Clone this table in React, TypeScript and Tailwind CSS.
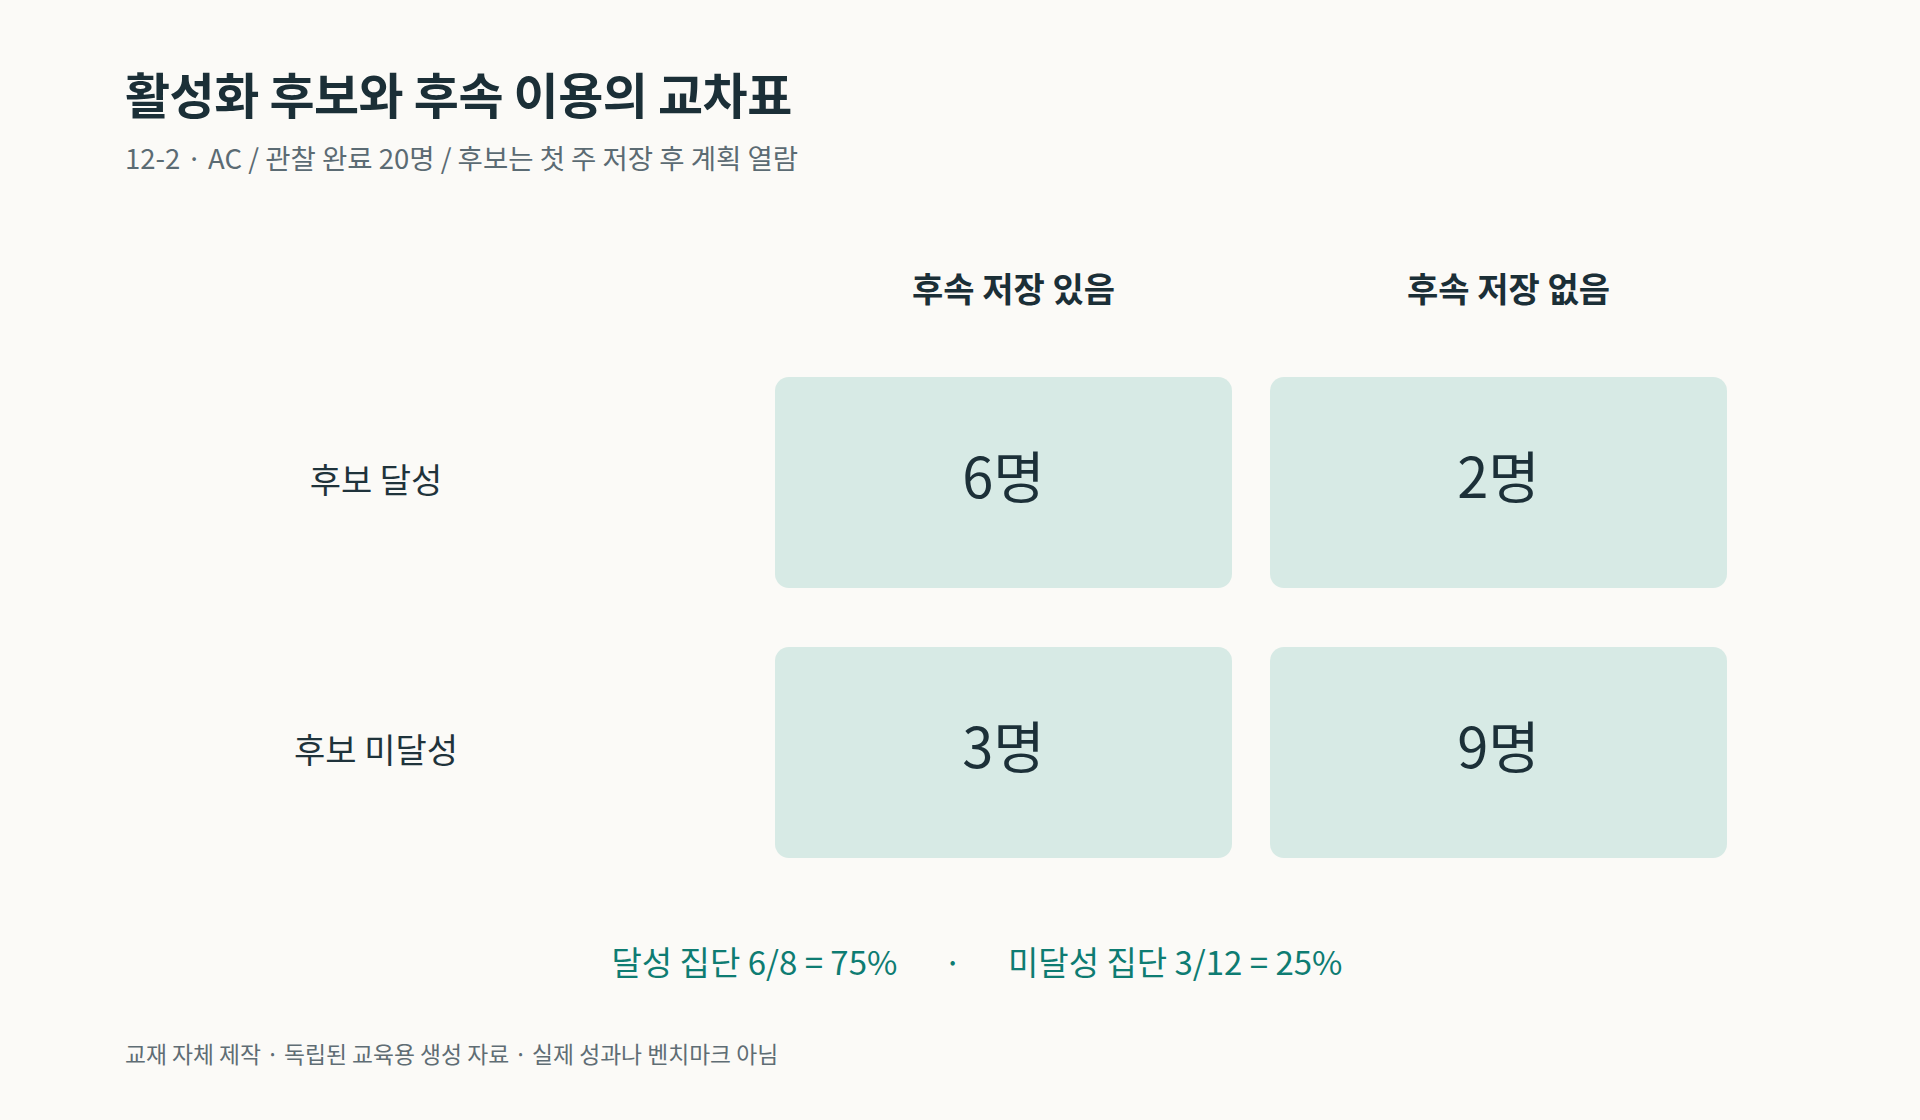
const font = { fontFamily: '"Noto Sans CJK KR", "Noto Sans", sans-serif' };

const cols = ["후속 저장 있음", "후속 저장 없음"];

const rows = [
	{ label: "후보 달성", cells: ["6명", "2명"] },
	{ label: "후보 미달성", cells: ["3명", "9명"] },
];

function Cell({ value }: { value: string }) {
	return (
		<div className="flex h-[211px] w-[457px] items-center justify-center rounded-[14px] bg-[#d7eae5] pb-[18px]">
			<span className="text-[56px] leading-none text-[#1c3038]">{value}</span>
		</div>
	);
}

export default function App() {
	return (
		<div
			className="h-[1120px] w-full bg-[#fbfaf7] px-[125px] pt-[63px]"
			style={font}
		>
			<h1 className="text-[49px] font-bold leading-[60px] tracking-[-0.01em] text-[#1b2f37]">
				활성화 후보와 후속 이용의 교차표
			</h1>
			<p className="mt-[16px] text-[27.5px] leading-[36px] text-[#5b6b73]">
				12-2 · AC / 관찰 완료 20명 / 후보는 첫 주 저장 후 계획 열람
			</p>

			<div className="mt-[91px] flex">
				<div className="w-[650px]" />
				<div className="flex gap-[38px]">
					{cols.map((c) => (
						<div
							key={c}
							className="w-[457px] pl-[20px] text-center text-[34px] font-bold leading-[44px] text-[#1b2f37]"
						>
							{c}
						</div>
					))}
				</div>
			</div>

			<div className="mt-[67px] flex flex-col gap-[59px]">
				{rows.map((r) => (
					<div key={r.label} className="flex items-center">
						<div className="w-[502px] pb-[8px] text-center text-[34px] leading-[44px] text-[#1f333b]">
							{r.label}
						</div>
						<div className="ml-[148px] flex gap-[38px]">
							{r.cells.map((v) => (
								<Cell key={v} value={v} />
							))}
						</div>
					</div>
				))}
			</div>

			<div className="mt-[80px] flex justify-center pl-[34px] text-[33px] leading-[46px] text-[#0e7c72]">
				<span>달성 집단 6/8 = 75%</span>
				<span className="mx-[46px]">·</span>
				<span>미달성 집단 3/12 = 25%</span>
			</div>

			<p className="mt-[55px] text-[22.8px] leading-[30px] text-[#5f6d74]">
				교재 자체 제작 · 독립된 교육용 생성 자료 · 실제 성과나 벤치마크 아님
			</p>
		</div>
	);
}
